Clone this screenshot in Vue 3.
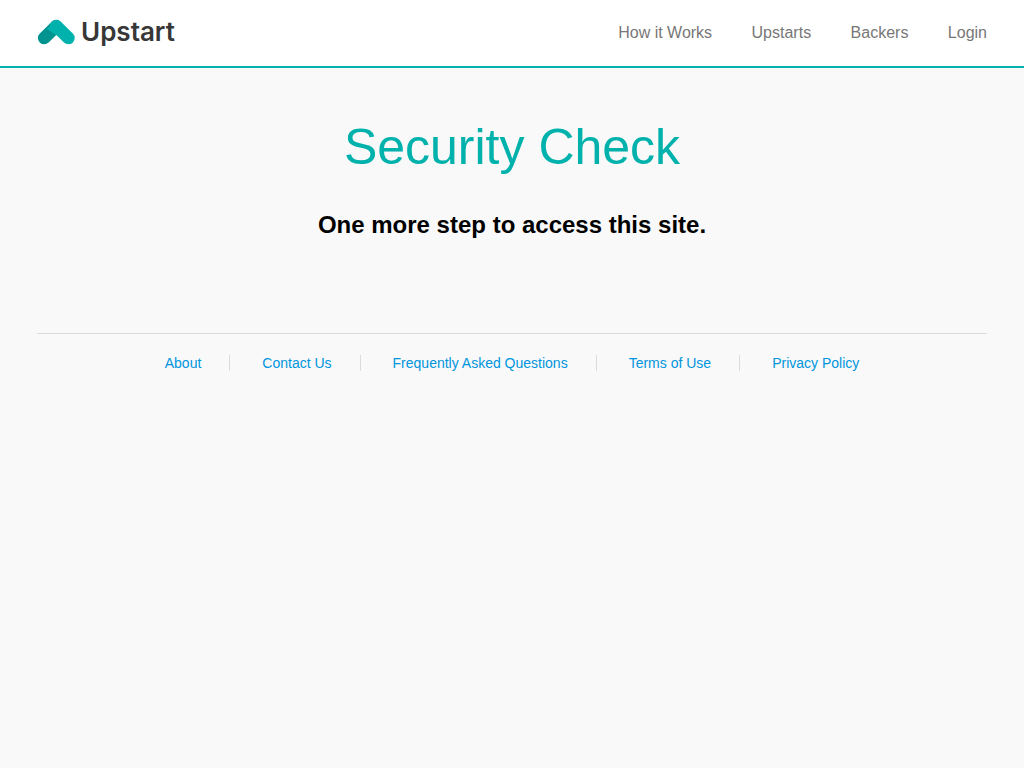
<script setup>
const navLinks = ['How it Works', 'Upstarts', 'Backers', 'Login']
const footerLinks = [
  'About',
  'Contact Us',
  'Frequently Asked Questions',
  'Terms of Use',
  'Privacy Policy',
]
</script>

<template>
  <div class="page">
    <header class="header">
      <a class="brand" href="#">
        <svg class="mark" viewBox="0 0 38 26" aria-hidden="true">
          <path class="mark-left" d="M7.2 19 L19.2 7.2" />
          <path class="mark-fold" d="M10 9.8 L14.9 5 L22 5.8 L22 13 L19.3 16.6 Z" />
          <path class="mark-right" d="M19.2 7 L31.4 19" />
        </svg>
        <span class="wordmark">Upstart</span>
      </a>
      <nav class="nav">
        <template v-for="link in navLinks" :key="link">
          <a href="#">{{ link }}</a>{{ ' ' }}
        </template>
      </nav>
    </header>

    <main class="main">
      <h1>Security Check</h1>
      <h2>One more step to access this site.</h2>
    </main>

    <footer class="footer">
      <ul>
        <li v-for="link in footerLinks" :key="link">
          <a href="#">{{ link }}</a>
        </li>
      </ul>
    </footer>
  </div>
</template>

<style>
body {
  background: #f9f9f9;
}
</style>

<style scoped>
.page {
  font-family: "Liberation Sans", Arial, sans-serif;
}

a {
  text-decoration: none;
}

.header {
  display: flex;
  align-items: center;
  justify-content: space-between;
  height: 66px;
  padding: 0 37px;
  background: #fff;
  border-bottom: 2px solid #00b1ac;
}

.brand {
  display: flex;
  align-items: center;
  gap: 6px;
  padding-bottom: 2px;
  color: #373737;
}

.mark {
  width: 38px;
  height: 26px;
}

.mark path {
  fill: none;
  stroke-width: 12.6;
  stroke-linecap: round;
}

.mark .mark-left {
  stroke: #00938f;
}

.mark .mark-right {
  stroke: #00b1ac;
}

.mark .mark-fold {
  fill: #00b1ac;
  stroke: none;
}

.wordmark {
  font-family: Inter, sans-serif;
  font-size: 26px;
  font-weight: 600;
  line-height: 32px;
}

.nav {
  font-size: 16px;
  line-height: 20px;
}

.nav a {
  color: #777;
}

.nav a + a {
  margin-left: 35px;
}

.main {
  padding-top: 49px;
  text-align: center;
}

h1 {
  margin: 0;
  color: #00b1ac;
  font-size: 50px;
  font-weight: 400;
  line-height: 60px;
}

h2 {
  margin: 34px 0 0;
  color: #000;
  font-size: 24px;
  font-weight: 700;
  line-height: 28px;
}

.footer {
  margin: 94px 37px 0;
  padding-top: 21px;
  border-top: 1px solid #dcdcdc;
}

.footer ul {
  display: flex;
  justify-content: center;
  margin: 0;
  padding: 0;
  list-style: none;
  font-size: 14px;
  line-height: 16px;
}

.footer li + li {
  margin-left: 28px;
  padding-left: 32px;
  border-left: 1px solid #dcdcdc;
}

.footer a {
  color: #0095dd;
}
</style>
